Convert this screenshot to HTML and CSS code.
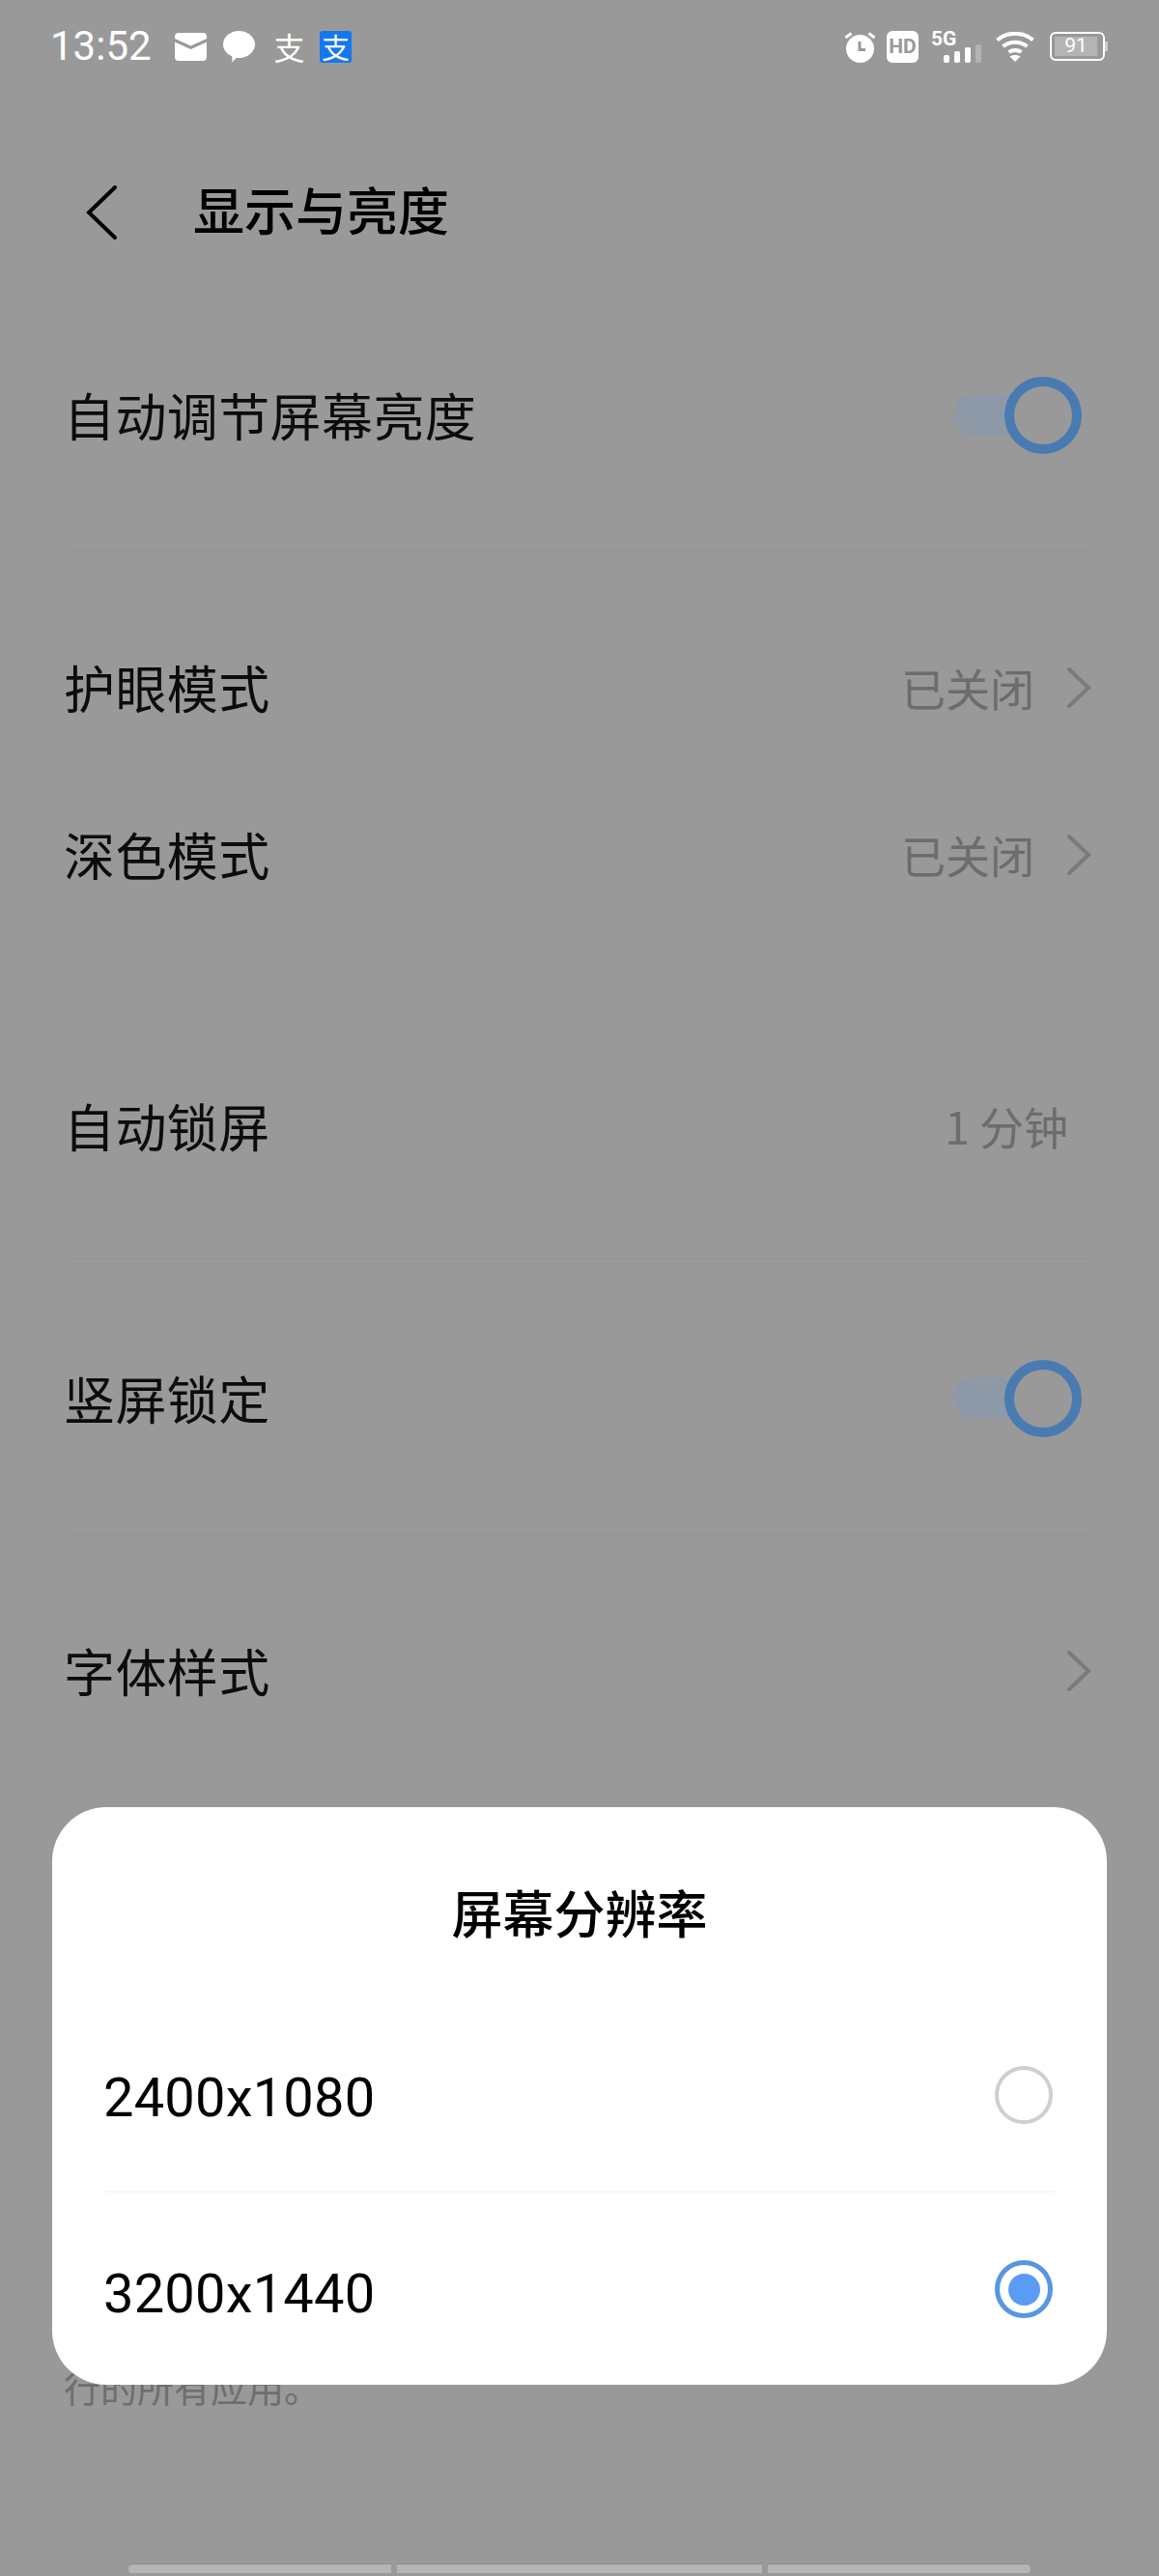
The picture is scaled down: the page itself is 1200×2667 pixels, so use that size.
FILE: index.html
```html
<!DOCTYPE html>
<html>
	<head>
		<meta charset="UTF-8">
		<title>显示与亮度</title>
		<link rel="stylesheet" href="styles.css">
	</head>
	<body>
		<div class="page">
			<div class="status">
				<span class="time">13:52</span>
				<svg class="ic-mail" width="33" height="29" viewBox="0 0 33 29"><path d="M4 0H29A4 4 0 0 1 33 4V6L16.500 13.500L0 6V4A4 4 0 0 1 4 0Z" fill="#fff"/><path d="M0 9.500L16.500 17L33 9.500V25A4 4 0 0 1 29 29H4A4 4 0 0 1 0 25Z" fill="#fff"/></svg>
				<svg class="ic-bubble" width="33" height="33" viewBox="0 0 33 33"><path d="M16.500 0C25.600 0 33 6.300 33 14C33 21.700 25.600 28 16.500 28C15.600 28 14.700 27.900 13.800 27.800L9.500 32.500L9.200 26.300C3.700 24 0 19.300 0 14C0 6.300 7.400 0 16.500 0Z" fill="#fff"/></svg>
				<span class="zhi">支</span>
				<span class="zhi zhi-blue">支</span>
				<span class="grow"></span>
				<svg class="ic-alarm" width="33" height="33" viewBox="0 0 33 33"><circle cx="16.500" cy="18.500" r="14.500" fill="#fff"/><path d="M1.500 7L7.500 2.500M31.500 7L25.500 2.500" stroke="#fff" stroke-width="3" fill="none"/><path d="M16 11V19.500H22" stroke="#999" stroke-width="3" fill="none"/></svg>
				<span class="hd">HD</span>
				<div class="signal">
					<span class="fiveg">5G</span>
					<svg width="39" height="19" viewBox="0 0 39 19"><rect x="0" y="11" width="6" height="8" rx="2" fill="#fff"/><rect x="11" y="7" width="6" height="12" rx="2" fill="#fff"/><rect x="22" y="3" width="6" height="16" rx="2" fill="#fff"/><rect x="33" y="0" width="6" height="19" rx="2" fill="#b4b4b4"/></svg>
				</div>
				<svg class="ic-wifi" width="40" height="31" viewBox="0 0 40 31"><path d="M1.500 8.500C12 -0.500 28 -0.500 38.500 8.500M7.500 15C14.500 9.300 25.500 9.300 32.500 15M13.500 21C17 18.300 23 18.300 26.500 21" stroke="#fff" stroke-width="4" fill="none"/><path d="M20 31L14.500 25.500C17.500 23.500 22.500 23.500 25.500 25.500Z" fill="#fff"/></svg>
				<div class="battery">
					<div class="battery-body"><span class="battery-fill">91</span></div>
					<span class="battery-nub"></span>
				</div>
			</div>

			<div class="header">
				<svg class="back" width="32" height="56" viewBox="0 0 32 56"><path d="M30 2L3 28L30 54" stroke="#000" stroke-width="4" stroke-linecap="round" fill="none"/></svg>
				<span class="title">显示与亮度</span>
			</div>

			<div class="section s1">
				<div class="row">
					<span class="label">自动调节屏幕亮度</span>
					<div class="switch"><span class="knob"></span></div>
				</div>
			</div>

			<div class="section s2">
				<div class="row">
					<span class="label">护眼模式</span>
					<div class="right"><span class="val">已关闭</span><svg class="chev" width="26" height="44" viewBox="0 0 26 44"><path d="M3 3L23 22L3 41" stroke="#7a7a7a" stroke-width="4" stroke-linecap="round" fill="none"/></svg></div>
				</div>
				<div class="row">
					<span class="label">深色模式</span>
					<div class="right"><span class="val">已关闭</span><svg class="chev" width="26" height="44" viewBox="0 0 26 44"><path d="M3 3L23 22L3 41" stroke="#7a7a7a" stroke-width="4" stroke-linecap="round" fill="none"/></svg></div>
				</div>
			</div>

			<div class="section s3">
				<div class="row">
					<span class="label">自动锁屏</span>
					<span class="val val-only">1 分钟</span>
				</div>
			</div>

			<div class="section s4">
				<div class="row">
					<span class="label">竖屏锁定</span>
					<div class="switch"><span class="knob"></span></div>
				</div>
			</div>

			<div class="section s5">
				<div class="row">
					<span class="label">字体样式</span>
					<div class="right"><svg class="chev" width="26" height="44" viewBox="0 0 26 44"><path d="M3 3L23 22L3 41" stroke="#7a7a7a" stroke-width="4" stroke-linecap="round" fill="none"/></svg></div>
				</div>
			</div>

			<p class="note">行的所有应用。</p>

			<div class="gesture">
				<span class="seg seg-a"></span>
				<span class="seg seg-b"></span>
				<span class="seg seg-c"></span>
			</div>

			<div class="dialog">
				<div class="dialog-title">屏幕分辨率</div>
				<div class="option">
					<span class="res">2400x1080</span>
					<span class="radio"></span>
				</div>
				<div class="option option-on">
					<span class="res res-on">3200x1440</span>
					<span class="radio radio-on"></span>
				</div>
			</div>
		</div>
	</body>
</html>
```

FILE: styles.css
```css
*{margin: 0;padding: 0;box-sizing: border-box;}
body{background: #999;font-family: "Noto Sans CJK SC", "Noto Sans", sans-serif;color: #0c0c0c;}
.page{width: 1200px;height: 2667px;position: relative;overflow: hidden;display: flex;flex-direction: column;background: #999;}

/* status bar */
.status{height: 96px;padding: 0 53px 0 52px;display: flex;align-items: center;color: #fff;}
.time{font-family: Roboto, sans-serif;font-size: 42px;width: 129px;line-height: 1;}
.ic-mail{margin-right: 17px;}
.ic-bubble{margin-right: 19px;}
.zhi{width: 33px;height: 33px;margin-right: 15px;font-size: 32px;line-height: 33px;text-align: center;}
.zhi-blue{background: #1677ee;border-radius: 3px;margin-right: 0;font-size: 29px;}
.grow{flex: 1;}
.ic-alarm{margin-right: 11px;}
.hd{width: 33px;height: 33px;background: #fff;border-radius: 6px;color: #999;font-family: Roboto, sans-serif;font-weight: 700;font-size: 21px;line-height: 33px;text-align: center;margin-right: 13px;}
.signal{width: 52px;height: 33px;position: relative;margin-right: 15px;}
.signal svg{position: absolute;right: 0;bottom: 0;}
.fiveg{position: absolute;left: 0;top: -1px;font-family: Roboto, sans-serif;font-weight: 700;font-size: 21px;line-height: 18px;}
.ic-wifi{margin-right: 16px;}
.battery{display: flex;align-items: center;}
.battery-body{width: 57px;height: 30px;border: 2.500px solid #fff;border-radius: 6px;padding: 3px;}
.battery-fill{display: block;height: 100%;width: 44px;background: #b4b4b4;color: #fff;font-family: Roboto, sans-serif;font-size: 21px;line-height: 19px;text-align: center;}
.battery-nub{width: 3px;height: 10px;background: #ccc;}

/* header */
.header{height: 211px;padding: 30px 0 0 89px;display: flex;align-items: center;border-bottom: 1px solid #939393;}
.back{margin: 8px 79px 0 0;}
.title{font-size: 53px;font-weight: 500;color: #000;}

/* list */
.section{margin: 0 68px;border-bottom: 1px solid #949494;}
.s1{padding: 75px 0 88px;}
.s2{padding: 93px 0 91px;}
.s2 .row + .row{margin-top: 73px;}
.s3{padding: 89px 0 85px;}
.s4{padding: 96px 0 89px;}
.s5{padding: 92px 0 0;border-bottom: 0;}
.row{height: 100px;display: flex;align-items: center;justify-content: space-between;font-size: 53px;}
.label{margin: 0 0 7px -2px;letter-spacing: 0.4px;}
.right{display: flex;align-items: center;margin-bottom: 4px;}
.val{font-size: 46px;color: #6c6c6c;margin-bottom: 2px;}
.val-only{padding-right: 26px;margin-bottom: 6px;}
.chev{margin: 0 2px 0 33px;}
.switch{width: 133px;height: 80px;position: relative;margin: 0 12px 4px 0;}
.switch::before{content: "";position: absolute;left: 0;top: 18px;width: 90px;height: 43px;background: #8e99a8;border-radius: 22px;}
.knob{position: absolute;right: 0;top: 0;width: 80px;height: 80px;border: 10px solid #4a7ab2;border-radius: 50%;background: #999;}

.note{margin: 665px 0 0 66px;font-size: 38px;line-height: 48px;color: #6e6e6e;}

.gesture{margin: auto 0 3px 133px;display: flex;gap: 6px;}
.seg{height: 9px;background: #b5b5b5;box-shadow: 0 -1px 0 #8c8c8c;}
.seg-a{width: 272px;border-radius: 4px 0 0 4px;}
.seg-b{width: 378px;}
.seg-c{width: 272px;border-radius: 0 4px 4px 0;}

/* dialog */
.dialog{position: absolute;left: 54px;top: 1871px;width: 1092px;height: 598px;background: #fff;border-radius: 56px;padding: 0 54px;color: #000;}
.dialog-title{height: 199px;padding-top: 72px;font-size: 53px;font-weight: 500;line-height: 72px;text-align: center;}
.option{height: 200px;display: flex;align-items: center;justify-content: space-between;font-family: Roboto, sans-serif;font-size: 56px;border-bottom: 2px solid #f6f6f6;margin-right: -1px;}
.option-on{border-bottom: 0;}
.res{margin-left: -1px;padding-top: 5px;letter-spacing: 0.2px;}
.res-on{padding-top: 9px;}
.radio{width: 60px;height: 60px;border: 4px solid #cfcfcf;border-radius: 50%;margin-right: 3px;}
.radio-on{border: 5px solid #5596e6;display: flex;align-items: center;justify-content: center;}
.radio-on::after{content: "";width: 33px;height: 33px;border-radius: 50%;background: #5a9bf5;}
```
